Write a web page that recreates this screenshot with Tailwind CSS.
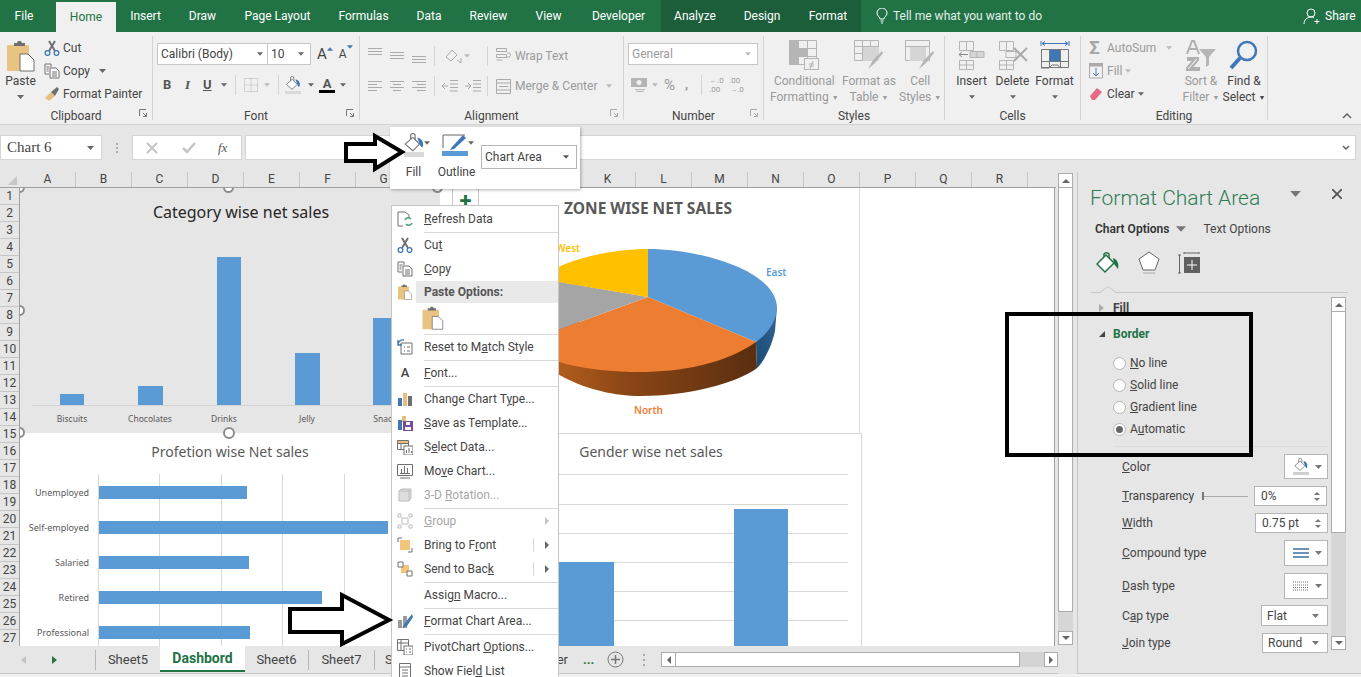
<!DOCTYPE html>
<html lang="en">
<head>
    <meta charset="UTF-8">
    <title>Excel - Format Chart Area</title>
    <script src="https://cdn.jsdelivr.net/npm/@tailwindcss/browser@4"></script>
</head>
<body class="m-0 overflow-hidden">
<svg class="hidden" xmlns="http://www.w3.org/2000/svg">
    <symbol id="caret" viewBox="0 0 7 4"><polygon points="0,0 7,0 3.5,4" fill="currentColor"/></symbol>
    <symbol id="clip" viewBox="0 0 28 32">
        <rect x="0" y="5" width="22" height="26" rx="1" fill="#e8c382"/>
        <path d="M7 6V3h3l1-2h3l1 2h3v3z" fill="#6f6f6f"/>
        <path d="M13 14h8l6 6v11H13z" fill="#fff" stroke="#6f6f6f"/>
    </symbol>
    <symbol id="cut" viewBox="0 0 16 16">
        <path d="M5 1l6 10M11 1L5 11" stroke="#6f6f6f" stroke-width="2" fill="none"/>
        <circle cx="3.5" cy="13" r="2.4" fill="none" stroke="#3f78b5" stroke-width="1.3"/>
        <circle cx="12.5" cy="13" r="2.4" fill="none" stroke="#3f78b5" stroke-width="1.3"/>
    </symbol>
    <symbol id="copy" viewBox="0 0 16 16">
        <path d="M1 1h6v3M1 1v10h4" fill="#fff" stroke="#6f6f6f"/>
        <path d="M6 5h6l3 3v7H6z" fill="#fff" stroke="#6f6f6f"/>
        <path d="M8 9h5M8 11h5M8 13h5M2.500 4h3M2.500 6h2M2.500 8h2" stroke="#6f6f6f"/>
    </symbol>
    <symbol id="bucket" viewBox="0 0 18 18">
        <path d="M6 7V2.500a2 2 0 0 1 4 0V7" fill="none" stroke="#6f6f6f"/>
        <path d="M1 10l7-6 6 6-6 6z" fill="#fff" stroke="#6f6f6f"/>
        <path d="M12 4c4 1 6 4 5 8-.2 1-1.500 1-2 0l-1-2z" fill="#3f78b5"/>
    </symbol>
</svg>

<div class="relative w-[1361px] h-[677px] overflow-hidden bg-[#e6e6e6] text-[12px] text-[#444] font-['Roboto',sans-serif]">

    <!-- tabs -->
    <div class="flex h-[32px] bg-[#217346] text-white text-[12px] leading-[32px]">
        <div class="w-[48px] text-center">File</div>
        <div class="w-[60px] ml-[8px] mt-[2px] leading-[30px] text-center bg-[#f0f0f0] text-[#217346]">Home</div>
        <div class="w-[59px] text-center">Insert</div>
        <div class="w-[55px] text-center">Draw</div>
        <div class="w-[95px] text-center">Page Layout</div>
        <div class="w-[77px] text-center">Formulas</div>
        <div class="w-[54px] text-center">Data</div>
        <div class="w-[65px] text-center">Review</div>
        <div class="w-[55px] text-center">View</div>
        <div class="w-[85px] text-center">Developer</div>
        <div class="flex w-[200px] bg-[#1b5e39]">
            <div class="w-[68px] text-center">Analyze</div>
            <div class="w-[66px] text-center">Design</div>
            <div class="w-[66px] text-center">Format</div>
        </div>
        <div class="flex items-center ml-[15px] w-[427px]">
            <svg class="w-[12px] h-[16px]" viewBox="0 0 12 16" fill="none" stroke="#fff"><path d="M4 11c0-2-3-3-3-6a5 5 0 0 1 10 0c0 3-3 4-3 6zM4.500 13h3M5 15h2"/></svg>
            <span class="ml-[5px] text-[#e3efe8]">Tell me what you want to do</span>
        </div>
        <div class="flex items-center">
            <svg class="w-[18px] h-[18px]" viewBox="0 0 18 18" fill="none" stroke="#fff"><circle cx="8" cy="6" r="4"/><path d="M1 17c0-4 3-7 7-7 1 0 2 .2 3 .6M14 12v5M11.500 14.500h5"/></svg>
            <span class="ml-[4px]">Share</span>
        </div>
    </div>

    <!-- ribbon -->
    <div class="relative flex h-[93px] bg-[#f0f0f0] border-b border-[#d2d2d2] whitespace-nowrap">
        <!-- clipboard -->
        <div class="relative w-[153px] h-[84px] mt-[4px] border-r border-[#d4d4d4]">
            <div class="flex h-[73px]">
                <div class="flex flex-col items-center w-[41px]">
                    <svg class="w-[28px] h-[32px] mt-[4px] mb-[1px]"><use href="#clip"/></svg>
                    <span class="leading-[16px]">Paste</span>
                    <svg class="w-[7px] h-[4px] mt-[6px] text-[#666]"><use href="#caret"/></svg>
                </div>
                <div class="flex flex-col">
                    <div class="flex items-center h-[23px]"><svg class="w-[16px] h-[16px] ml-[3px]"><use href="#cut"/></svg><span class="ml-[3px]">Cut</span></div>
                    <div class="flex items-center h-[23px]"><svg class="w-[16px] h-[16px] ml-[3px]"><use href="#copy"/></svg><span class="ml-[3px]">Copy</span><svg class="w-[7px] h-[4px] ml-[9px] text-[#666]"><use href="#caret"/></svg></div>
                    <div class="flex items-center h-[23px]">
                        <svg class="w-[16px] h-[16px] ml-[3px]" viewBox="0 0 16 16"><path d="M1 12l6-6 4 4-6 5z" fill="#e6bf7e"/><path d="M7 6l6-5 2 2-4 7z" fill="#6f6f6f"/></svg>
                        <span class="ml-[3px]">Format Painter</span>
                    </div>
                </div>
            </div>
            <div class="h-[11px] text-center leading-[14px]">Clipboard</div>
            <svg class="absolute right-[5px] top-[73px] w-[8px] h-[8px]" viewBox="0 0 8 8" fill="none" stroke="#777"><path d="M.5 7V.500H7M4 4l3.500 3.500M7.500 4v3.500H4"/></svg>
        </div>

        <!-- font -->
        <div class="relative w-[207px] h-[84px] mt-[4px] border-r border-[#d4d4d4]">
            <div class="h-[73px] pl-[4px] pt-[7px]">
                <div class="flex items-center h-[22px]">
                    <div class="flex items-center justify-between w-[111px] h-[22px] px-[3px] bg-white border border-[#c6c6c6]"><span>Calibri (Body)</span><svg class="w-[6px] h-[4px] mr-[1px] text-[#666]"><use href="#caret"/></svg></div>
                    <div class="flex items-center justify-between w-[43px] h-[22px] px-[3px] bg-white border border-[#c6c6c6] border-l-0"><span>10</span><svg class="w-[6px] h-[4px] mr-[3px] text-[#666]"><use href="#caret"/></svg></div>
                    <span class="relative ml-[6px] text-[15px] leading-none">A<svg class="absolute left-[10px] top-[0px] w-[6px] h-[4px] rotate-180 text-[#3f78b5]"><use href="#caret"/></svg></span>
                    <span class="relative ml-[12px] text-[12px] leading-none">A<svg class="absolute left-[8px] top-[-3px] w-[6px] h-[4px] text-[#3f78b5]"><use href="#caret"/></svg></span>
                </div>
                <div class="flex items-center h-[24px] mt-[8px] text-[#555]">
                    <b class="ml-[6px] w-[12px] text-[13px]">B</b>
                    <i class="ml-[10px] w-[10px] text-[13px] font-['Liberation_Serif',serif] font-bold">I</i>
                    <u class="ml-[8px] w-[10px] text-[13px] font-bold">U</u>
                    <svg class="w-[6px] h-[4px] ml-[8px] text-[#666]"><use href="#caret"/></svg>
                    <span class="w-px h-[20px] ml-[8px] bg-[#d4d4d4]"></span>
                    <svg class="w-[14px] h-[14px] ml-[8px]" viewBox="0 0 14 14" fill="none" stroke="#b5b5b5" stroke-dasharray="1 1"><path d="M.5.500h13v13H.5zM7 .500v13M.5 7h13"/></svg>
                    <svg class="w-[6px] h-[4px] ml-[6px] text-[#bbb]"><use href="#caret"/></svg>
                    <span class="w-px h-[20px] ml-[8px] bg-[#d4d4d4]"></span>
                    <span class="relative flex w-[18px] h-[18px] ml-[6px]"><svg class="w-[16px] h-[15px]"><use href="#bucket"/></svg><span class="absolute left-0 bottom-0 w-[16px] h-[3px] bg-[#d9d9d9]"></span></span>
                    <svg class="w-[6px] h-[4px] ml-[5px] text-[#666]"><use href="#caret"/></svg>
                    <span class="flex flex-col items-center w-[16px] ml-[5px] font-bold text-[13px] leading-[13px]">A<span class="block w-[16px] h-[3px] bg-black"></span></span>
                    <svg class="w-[6px] h-[4px] ml-[5px] text-[#666]"><use href="#caret"/></svg>
                </div>
            </div>
            <div class="h-[11px] text-center leading-[14px]">Font</div>
            <svg class="absolute right-[5px] top-[73px] w-[8px] h-[8px]" viewBox="0 0 8 8" fill="none" stroke="#777"><path d="M.5 7V.500H7M4 4l3.500 3.500M7.500 4v3.500H4"/></svg>
        </div>

        <!-- alignment -->
        <div class="relative w-[264px] h-[84px] mt-[4px] border-r border-[#d4d4d4] text-[#9a9a9a]">
            <div class="h-[73px] pl-[8px]">
                <div class="flex items-center h-[35px] pt-[4px]">
                    <svg class="w-[14px] h-[14px] mb-[5px]" viewBox="0 0 14 14" stroke="#aaa"><path d="M0 2.500h14M0 5.500h14M0 8.500h14"/></svg>
                    <svg class="w-[14px] h-[14px] ml-[8px]" viewBox="0 0 14 14" stroke="#aaa"><path d="M0 3.500h14M0 6.500h14M0 9.500h14"/></svg>
                    <svg class="w-[14px] h-[14px] ml-[8px] mt-[5px]" viewBox="0 0 14 14" stroke="#aaa"><path d="M0 5.500h14M0 8.500h14M0 11.500h14"/></svg>
                    <span class="w-px h-[20px] ml-[8px] bg-[#d4d4d4]"></span>
                    <svg class="w-[17px] h-[16px] ml-[10px]" viewBox="0 0 17 16" fill="none" stroke="#aaa"><path d="M1 9l6-7 5 5-6 6zM12 12l4 3M16 10v5"/></svg>
                    <svg class="w-[6px] h-[4px] ml-[2px] text-[#bbb]"><use href="#caret"/></svg>
                    <span class="w-px h-[20px] ml-[17px] bg-[#d4d4d4]"></span>
                    <svg class="w-[15px] h-[15px] ml-[8px]" viewBox="0 0 15 15" fill="none" stroke="#aaa"><path d="M.5.500h10v3H.5zM.5 6.500h10v3H.5zM.5 12h6M11 5h2c2 0 2 4 0 4h-3"/></svg>
                    <span class="ml-[4px]">Wrap Text</span>
                </div>
                <div class="flex items-center h-[24px] mt-[3px]">
                    <svg class="w-[14px] h-[14px]" viewBox="0 0 14 14" stroke="#aaa"><path d="M0 2.500h14M0 5.500h9M0 8.500h14M0 11.500h9"/></svg>
                    <svg class="w-[14px] h-[14px] ml-[8px]" viewBox="0 0 14 14" stroke="#aaa"><path d="M0 2.500h14M3 5.500h8M0 8.500h14M3 11.500h8"/></svg>
                    <svg class="w-[14px] h-[14px] ml-[8px]" viewBox="0 0 14 14" stroke="#aaa"><path d="M0 2.500h14M5 5.500h9M0 8.500h14M5 11.500h9"/></svg>
                    <span class="w-px h-[20px] ml-[8px] bg-[#d4d4d4]"></span>
                    <svg class="w-[16px] h-[14px] ml-[7px]" viewBox="0 0 16 14" stroke="#aaa" fill="none"><path d="M8 1.500h8M8 5h8M8 8.500h8M8 12h8M6 7H0M3 4L0 7l3 3" /></svg>
                    <svg class="w-[16px] h-[14px] ml-[7px]" viewBox="0 0 16 14" stroke="#aaa" fill="none"><path d="M8 1.500h8M8 5h8M8 8.500h8M8 12h8M0 7h6M3 4l3 3-3 3" /></svg>
                    <span class="w-px h-[20px] ml-[6px] bg-[#d4d4d4]"></span>
                    <svg class="w-[15px] h-[15px] ml-[8px]" viewBox="0 0 15 15" fill="none" stroke="#aaa"><path d="M.5.500h14v14H.5zM.5 4h14M.5 11h14M3 7.500h9"/></svg>
                    <span class="ml-[4px]">Merge &amp; Center</span>
                    <svg class="w-[6px] h-[4px] ml-[9px] text-[#bbb]"><use href="#caret"/></svg>
                </div>
            </div>
            <div class="h-[11px] text-center leading-[14px] text-[#444]">Alignment</div>
            <svg class="absolute right-[5px] top-[73px] w-[8px] h-[8px]" viewBox="0 0 8 8" fill="none" stroke="#aaa"><path d="M.5 7V.500H7M4 4l3.500 3.500M7.500 4v3.500H4"/></svg>
        </div>

        <!-- number -->
        <div class="relative w-[140px] h-[84px] mt-[4px] border-r border-[#d4d4d4] text-[#9a9a9a]">
            <div class="h-[73px] pl-[4px] pt-[7px]">
                <div class="flex items-center justify-between w-[130px] h-[22px] px-[3px] bg-white border border-[#c6c6c6]"><span>General</span><svg class="w-[6px] h-[4px] mr-[3px] text-[#bbb]"><use href="#caret"/></svg></div>
                <div class="flex items-center h-[24px] mt-[8px]">
                    <svg class="w-[16px] h-[16px] ml-[3px]" viewBox="0 0 16 16" fill="#b5b5b5"><path d="M0 1h16v9H0z"/><circle cx="8" cy="5.500" r="2.500" fill="#f0f0f0"/><path d="M4 12h10v1H4zM5 14h8v1H5z"/></svg>
                    <svg class="w-[6px] h-[4px] ml-[5px] text-[#bbb]"><use href="#caret"/></svg>
                    <span class="ml-[6px] text-[15px]">%</span>
                    <b class="ml-[10px] text-[13px]">,</b>
                    <span class="w-px h-[20px] ml-[13px] bg-[#d4d4d4]"></span>
                    <span class="ml-[7px] w-[15px] text-[8px] leading-[9px]">&larr;.0<br>.00</span>
                    <span class="ml-[5px] w-[15px] text-[8px] leading-[9px]">.00<br>&rarr;.0</span>
                </div>
            </div>
            <div class="h-[11px] text-center leading-[14px] text-[#444]">Number</div>
            <svg class="absolute right-[5px] top-[73px] w-[8px] h-[8px]" viewBox="0 0 8 8" fill="none" stroke="#aaa"><path d="M.5 7V.500H7M4 4l3.500 3.500M7.500 4v3.500H4"/></svg>
        </div>

        <!-- styles -->
        <div class="w-[181px] h-[84px] mt-[4px] border-r border-[#d4d4d4] text-[#9a9a9a]">
            <div class="flex h-[73px] pl-[3px] text-center leading-[16px]">
                <div class="flex flex-col items-center w-[75px]">
                    <svg class="w-[30px] h-[32px] mt-[4px] mb-[1px]" viewBox="0 0 30 32" fill="none" stroke="#b5b5b5"><path d="M.5.500h27v24H.5zM.5 8.500h27M.5 16.500h27M9.500.500v24M18.500.500v24"/><path d="M1 1h8v24H1zM9 8h9v8H9z" fill="#b5b5b5" stroke="none"/><rect x="15.500" y="18.500" width="14" height="11" fill="#f0f0f0"/><path d="M20 24h5M20 26h5M24 21l-3 8" /></svg>
                    <span>Conditional</span>
                    <span>Formatting<span class="ml-[3px] text-[7px] align-[1px]">&#9660;</span></span>
                </div>
                <div class="flex flex-col items-center w-[55px]">
                    <svg class="w-[30px] h-[32px] mt-[4px] mb-[1px]" viewBox="0 0 30 32" fill="none" stroke="#b5b5b5"><path d="M.5.500h24v20H.5zM.5 6.500h24M.5 13.500h24M8.500.500v20M16.500.500v20"/><path d="M9 7h16v14H9z" fill="#d5d5d5" stroke="none"/><path d="M14 29l5-9 9-9 1 2-8 10-7 6z" fill="#b5b5b5" stroke="none"/></svg>
                    <span>Format as</span>
                    <span>Table<span class="ml-[3px] text-[7px] align-[1px]">&#9660;</span></span>
                </div>
                <div class="flex flex-col items-center w-[48px]">
                    <svg class="w-[30px] h-[32px] mt-[4px] mb-[1px]" viewBox="0 0 30 32" fill="none" stroke="#b5b5b5"><path d="M.5.500h24v20H.5zM.5 6.500h24"/><path d="M5 7h16v14H5z" fill="#d5d5d5" stroke="none"/><path d="M14 29l5-9 9-9 1 2-8 10-7 6z" fill="#b5b5b5" stroke="none"/></svg>
                    <span>Cell</span>
                    <span>Styles<span class="ml-[3px] text-[7px] align-[1px]">&#9660;</span></span>
                </div>
            </div>
            <div class="h-[11px] text-center leading-[14px] text-[#444]">Styles</div>
        </div>

        <!-- cells -->
        <div class="w-[136px] h-[84px] mt-[4px] border-r border-[#d4d4d4]">
            <div class="flex h-[73px] pl-[6px] text-center leading-[16px]">
                <div class="flex flex-col items-center w-[41px]">
                    <svg class="w-[28px] h-[32px] mt-[4px] mb-[1px]" viewBox="0 0 28 32" fill="none" stroke="#b5b5b5"><path d="M1.500 1.500h14v9h-14zM8.500 1.500v9M1.500 20.500h14v9h-14zM8.500 20.500v9M1.500 25h14"/><path d="M12 11.500h14v6H12zM19 11.500v6" fill="#d5d5d5"/><path d="M10 14.500H1M4 12l-3 2.500L4 17" stroke="#888"/></svg>
                    <span>Insert</span>
                    <svg class="w-[6px] h-[4px] mt-[6px] text-[#666]"><use href="#caret"/></svg>
                </div>
                <div class="flex flex-col items-center w-[41px]">
                    <svg class="w-[30px] h-[32px] mt-[4px] mb-[1px]" viewBox="0 0 30 32" fill="none" stroke="#b5b5b5"><path d="M1.500 1.500h14v9h-14zM8.500 1.500v9M1.500 20.500h14v9h-14zM8.500 20.500v9M1.500 25h14M8 11.500h10v6H8z"/><path d="M16 8l13 13M29 8L16 21" stroke="#aaa" stroke-width="2"/></svg>
                    <span>Delete</span>
                    <svg class="w-[6px] h-[4px] mt-[6px] text-[#666]"><use href="#caret"/></svg>
                </div>
                <div class="flex flex-col items-center w-[43px]">
                    <svg class="w-[30px] h-[32px] mt-[2px] mb-[3px]" viewBox="0 0 30 32" fill="none" stroke="#777"><path d="M1 3v5M29 3v5M2 5.500h26M2 5.500l3-2M2 5.500l3 2M28 5.500l-3-2M28 5.500l-3 2" stroke="#3f78b5"/><path d="M1.500 11.500h27v18h-27zM1.500 23.500h27M9.500 11.500v18M20.500 11.500v18"/><rect x="10" y="12" width="10" height="11" fill="#3f78b5" stroke="none"/><path d="M1 30h8l3-3h6l2 3" stroke="#777"/></svg>
                    <span>Format</span>
                    <svg class="w-[6px] h-[4px] mt-[6px] text-[#666]"><use href="#caret"/></svg>
                </div>
            </div>
            <div class="h-[11px] text-center leading-[14px]">Cells</div>
        </div>

        <!-- editing -->
        <div class="w-[187px] h-[84px] mt-[4px] border-r border-[#d4d4d4]">
            <div class="flex h-[73px]">
                <div class="flex flex-col w-[100px] pl-[8px]">
                    <div class="flex items-center h-[23px] text-[#9a9a9a]"><span class="w-[18px] text-[19px] leading-none font-bold text-[#a6a6a6]">&Sigma;</span><span>AutoSum</span><svg class="w-[6px] h-[4px] ml-[10px] text-[#bbb]"><use href="#caret"/></svg></div>
                    <div class="flex items-center h-[23px] text-[#9a9a9a]"><svg class="w-[14px] h-[16px] mr-[4px]" viewBox="0 0 14 16" fill="none" stroke="#aaa"><path d="M.5 3h13v12H.5z"/><path d="M0 0h14v3H0z" fill="#aaa" stroke="none"/><path d="M7 5v8M4 10l3 3 3-3" stroke="#4b7fb8"/></svg><span>Fill</span><svg class="w-[6px] h-[4px] ml-[3px] text-[#bbb]"><use href="#caret"/></svg></div>
                    <div class="flex items-center h-[23px]"><svg class="w-[14px] h-[14px] mr-[4px]" viewBox="0 0 14 14"><path d="M1 9l7-8 5 4-7 8H3z" fill="#e56a85"/></svg><span>Clear</span><svg class="w-[6px] h-[4px] ml-[3px] text-[#666]"><use href="#caret"/></svg></div>
                </div>
                <div class="flex flex-col items-center w-[40px] text-[#9a9a9a] leading-[16px] text-center">
                    <svg class="w-[30px] h-[32px] mt-[4px] mb-[1px]" viewBox="0 0 30 32"><path d="M1 14L6 1h2l5 13M3 9h8M2 18h10v2L5 28h8v2H1v-2L8 20H2z" fill="none" stroke="#b0b0b0" stroke-width="2"/><path d="M13 9h17l-7 8v8l-3 2V17z" fill="#b5b5b5"/></svg>
                    <span>Sort &amp;</span>
                    <span>Filter<span class="ml-[3px] text-[7px] align-[1px]">&#9660;</span></span>
                </div>
                <div class="flex flex-col items-center w-[44px] ml-[1px] leading-[16px] text-center">
                    <svg class="w-[30px] h-[32px] mt-[4px] mb-[1px]" viewBox="0 0 30 32" fill="none" stroke="#3f78b5"><circle cx="18" cy="11" r="9" stroke-width="2.500"/><path d="M11 18L2 28" stroke-width="4"/></svg>
                    <span>Find &amp;</span>
                    <span>Select<span class="ml-[3px] text-[7px] align-[1px]">&#9660;</span></span>
                </div>
            </div>
            <div class="h-[11px] text-center leading-[14px]">Editing</div>
        </div>

        <svg class="absolute right-[9px] bottom-[5px] w-[10px] h-[6px]" viewBox="0 0 10 6" fill="none" stroke="#666" stroke-width="1.500"><path d="M1 5l4-4 4 4"/></svg>
    </div>

    <!-- formula bar -->
    <div class="flex h-[47px] pt-[10px] pb-[12px]">
        <div class="flex items-center justify-between w-[102px] bg-white border border-[#d4d4d4] pl-[6px] pr-[7px] text-[15px] font-['Liberation_Serif',serif]"><span>Chart 6</span><svg class="w-[7px] h-[4px] text-[#666]"><use href="#caret"/></svg></div>
        <div class="flex flex-col justify-center gap-[2px] w-[30px] items-center"><span class="w-[2px] h-[2px] bg-[#aaa]"></span><span class="w-[2px] h-[2px] bg-[#aaa]"></span><span class="w-[2px] h-[2px] bg-[#aaa]"></span></div>
        <div class="flex items-center w-[110px] bg-white border border-[#d4d4d4] text-[#c4c4c4]">
            <svg class="w-[12px] h-[12px] ml-[13px]" viewBox="0 0 12 12" stroke="#c4c4c4" stroke-width="2"><path d="M1 1l10 10M11 1L1 11"/></svg>
            <svg class="w-[14px] h-[12px] ml-[24px]" viewBox="0 0 14 12" fill="none" stroke="#c4c4c4" stroke-width="2.500"><path d="M1 6l4 4 8-9"/></svg>
            <i class="ml-[22px] text-[13px] text-[#555] font-['Liberation_Serif',serif]">fx</i>
        </div>
        <div class="flex items-center justify-end w-[1111px] ml-[3px] bg-white border border-[#d4d4d4] pr-[5px]">
            <svg class="w-[8px] h-[5px]" viewBox="0 0 8 5" fill="none" stroke="#666" stroke-width="1.500"><path d="M1 1l3 3 3-3"/></svg>
        </div>
    </div>

    <div class="flex">
        <!-- worksheet -->
        <div class="w-[1077px]">
            <div id="columns" class="flex h-[16px] w-[1056px] bg-[#e6e6e6] border-b border-[#9f9f9f] text-[12px] leading-[15px]">
                <div class="w-[20px] relative"><span class="absolute right-[3px] bottom-[2px] w-0 h-0 border-l-[9px] border-l-transparent border-b-[9px] border-b-[#c6c6c6]"></span></div>
            </div>
            <div class="flex">
                <div id="rows" class="w-[20px] h-[458px] overflow-hidden bg-[#e6e6e6] border-r border-[#9f9f9f] text-[12px]"></div>
                <div class="relative w-[1035px] h-[458px] overflow-hidden bg-white border-r border-[#9f9f9f]">
                    <!-- Category chart -->
                    <svg class="absolute left-0 top-0" width="420" height="246" viewBox="20 188 420 246" font-family="Noto Sans">
                        <rect x="20" y="188" width="420" height="245" fill="#e7e6e6"/>
                        <text x="241" y="218" text-anchor="middle" font-size="16" fill="#262626">Category wise net sales</text>
                        <path d="M32 405.500H390" stroke="#d4d4d4"/>
                        <g fill="#5b9bd5"><rect x="60" y="394" width="24" height="11"/><rect x="138" y="386" width="25" height="19"/><rect x="217" y="257" width="24" height="148"/><rect x="295" y="353" width="25" height="52"/><rect x="373" y="318" width="25" height="87"/></g>
                        <g font-size="8.500" fill="#595959" text-anchor="middle"><text x="72" y="422">Biscuits</text><text x="150" y="422">Chocolates</text><text x="224" y="422">Drinks</text><text x="307" y="422">Jelly</text><text x="385" y="422">Snack</text></g>
                    </svg>
                    <!-- Zone chart -->
                    <svg class="absolute left-[420px] top-0" width="420" height="246" viewBox="440 188 420 246" font-family="Noto Sans">
                        <defs>
                            <linearGradient id="side" x1="0" x2="1" y1="0" y2="0"><stop offset="0" stop-color="#c8691f"/><stop offset=".45" stop-color="#8a4616"/><stop offset="1" stop-color="#5a2e0f"/></linearGradient>
                            <linearGradient id="blueside" x1="0" x2="1" y1="1" y2="0"><stop offset="0" stop-color="#1d4a73"/><stop offset="1" stop-color="#2f6498"/></linearGradient>
                        </defs>
                        <path d="M859.500 188V433.500H440" fill="none" stroke="#d9d9d9"/>
                        <text x="648" y="214" text-anchor="middle" font-size="15.500" font-weight="700" fill="#595959">ZONE WISE NET SALES</text>
                        <path d="M520 330C530 370 590 396 640 396C700 396 745 378 757 368L756 342L560 320z" fill="url(#side)"/>
                        <path d="M756 342L777 307L775 331C772 345 765 360 757 368z" fill="url(#blueside)"/>
                        <path d="M648 297V249C700 249 775 270 777 307C777 320 768 334 756 342z" fill="#5b9bd5"/>
                        <path d="M648 297L756 342C725 364 680 372 640 372C590 372 540 362 530 345L530 340z" fill="#ed7d31"/>
                        <path d="M648 297L530 340L525 285L560 282z" fill="#a5a5a5"/>
                        <path d="M648 297L540 279C560 260 610 249 648 249z" fill="#ffc000"/>
                        <g font-size="10" font-weight="600"><text x="766" y="276" fill="#5b9bd5">East</text><text x="556" y="252" fill="#ffc000">West</text><text x="634" y="414" fill="#ed7d31">North</text></g>
                    </svg>
                    <!-- Profession chart -->
                    <svg class="absolute left-0 top-[246px]" width="420" height="212" viewBox="20 434 420 212" font-family="Noto Sans">
                        <text x="230" y="457" text-anchor="middle" font-size="14" fill="#595959">Profetion wise Net sales</text>
                        <path d="M98.500 474V646M159.500 474V646M221.500 474V646M282.500 474V646M344.500 474V646" stroke="#d9d9d9"/>
                        <g fill="#5b9bd5"><rect x="99" y="486" width="148" height="13"/><rect x="99" y="521" width="289" height="13"/><rect x="99" y="556" width="150" height="13"/><rect x="99" y="591" width="223" height="13"/><rect x="99" y="626" width="151" height="13"/></g>
                        <g font-size="9" fill="#595959" text-anchor="end"><text x="89" y="496">Unemployed</text><text x="89" y="531">Self-employed</text><text x="89" y="566">Salaried</text><text x="89" y="601">Retired</text><text x="89" y="636">Professional</text></g>
                    </svg>
                    <!-- Gender chart -->
                    <svg class="absolute left-[420px] top-[245px]" width="443" height="213" viewBox="440 433 443 213" font-family="Noto Sans">
                        <path d="M440 433.500H861.500V646" fill="none" stroke="#d9d9d9"/>
                        <text x="651" y="457" text-anchor="middle" font-size="14" fill="#595959">Gender wise net sales</text>
                        <path d="M500 474.500H848M500 504.500H848M500 533.500H848M500 562.500H848M500 591.500H848M500 620.500H848" stroke="#d9d9d9"/>
                        <g fill="#5b9bd5"><rect x="540" y="562" width="74" height="84"/><rect x="734" y="509" width="54" height="137"/></g>
                    </svg>
                    <!-- selection handles -->
                    <span class="absolute left-[203px] top-[-6px] w-[11px] h-[11px] rounded-full bg-white border-2 border-[#8c8c8c]"></span>
                    <span class="absolute left-[-6px] top-[-6px] w-[11px] h-[11px] rounded-full bg-white border-2 border-[#8c8c8c]"></span>
                    <span class="absolute left-[412px] top-[-6px] w-[11px] h-[11px] rounded-full bg-white border-2 border-[#8c8c8c]"></span>
                    <span class="absolute left-[-6px] top-[117px] w-[11px] h-[11px] rounded-full bg-white border-2 border-[#8c8c8c]"></span>
                    <span class="absolute left-[-6px] top-[239px] w-[11px] h-[11px] rounded-full bg-white border-2 border-[#8c8c8c]"></span>
                    <span class="absolute left-[203px] top-[239px] w-[12px] h-[12px] rounded-full bg-white border-2 border-[#8c8c8c]"></span>
                </div>
            </div>

            <!-- sheet tabs -->
            <div class="flex items-center h-[28px] w-[1058px] border-b border-[#c6c6c6] text-[13px]">
                <div class="flex items-center w-[96px] h-[20px] pl-[21px] border-r border-[#b5b5b5]">
                    <span class="w-0 h-0 border-y-[4px] border-y-transparent border-r-[5px] border-r-[#c4c4c4]"></span>
                    <span class="ml-[26px] w-0 h-0 border-y-[4px] border-y-transparent border-l-[5px] border-l-[#217346]"></span>
                </div>
                <div class="w-[64px] text-center">Sheet5</div>
                <div class="w-[85px] h-[26px] mb-[1px] leading-[24px] text-center font-bold text-[14px] text-[#217346] bg-white border-b-2 border-[#217346]">Dashbord</div>
                <div class="w-[64px] h-[20px] leading-[20px] text-center border-r border-[#b5b5b5]">Sheet6</div>
                <div class="w-[66px] h-[20px] leading-[20px] text-center border-r border-[#b5b5b5]">Sheet7</div>
                <div class="flex justify-between w-[195px] pl-[10px] pr-[2px]"><span>Sheet8</span><span>Customer</span></div>
                <div class="ml-[13px] w-[12px] font-bold text-[#217346] leading-[10px]">...</div>
                <svg class="ml-[12px] w-[17px] h-[17px]" viewBox="0 0 17 17" fill="none" stroke="#777"><circle cx="8.500" cy="8.500" r="7.500"/><path d="M8.500 4v9M4 8.500h9" stroke-width="1.500"/></svg>
                <div class="ml-[19px] flex flex-col gap-[3px]"><span class="w-[2px] h-[2px] bg-[#aaa]"></span><span class="w-[2px] h-[2px] bg-[#aaa]"></span><span class="w-[2px] h-[2px] bg-[#aaa]"></span></div>
                <div class="flex items-center ml-[16px] w-[397px] h-[15px] bg-[#d4d4d4]">
                    <div class="flex items-center justify-center w-[15px] h-[15px] bg-white border border-[#ababab]"><span class="w-0 h-0 border-y-[4px] border-y-transparent border-r-[4px] border-r-[#666]"></span></div>
                    <div class="w-[344px] h-[15px] bg-white border-y border-r border-[#ababab]"></div>
                    <div class="flex items-center justify-center ml-[24px] w-[14px] h-[15px] bg-white border border-[#ababab]"><span class="w-0 h-0 border-y-[4px] border-y-transparent border-l-[4px] border-l-[#666]"></span></div>
                </div>
            </div>
        </div>

        <!-- format panel -->
        <div class="w-[284px] h-[502px] border-l border-b border-[#c6c6c6]">
            <div class="flex items-center h-[32px] mt-[10px] pl-[12px]">
                <span class="w-[200px] text-[21px] leading-none font-light text-[#2e7d55]">Format Chart Area</span>
                <svg class="w-[11px] h-[6px] mb-[9px] text-[#777]"><use href="#caret"/></svg>
                <svg class="ml-[31px] mb-[9px] w-[10px] h-[10px]" viewBox="0 0 10 10" stroke="#555" stroke-width="1.800"><path d="M0 0l10 10M10 0L0 10"/></svg>
            </div>
            <div class="flex items-center h-[22px] mt-[4px] pl-[17px]">
                <b class="font-semibold text-[#333]">Chart Options</b>
                <svg class="w-[10px] h-[6px] ml-[7px] text-[#777]"><use href="#caret"/></svg>
                <span class="ml-[17px]">Text Options</span>
            </div>
            <div class="flex items-center h-[26px] mt-[10px] pl-[18px]">
                <svg class="w-[24px] h-[24px]" viewBox="0 0 24 24" fill="none" stroke="#217346" stroke-width="1.500"><path d="M8 9V3a3 3 0 0 1 5 0v6"/><path d="M1 13l9-9 8 8-9 9z" fill="#fff"/><path d="M17 7c5 2 6 6 5 11l-4-5z" fill="#217346" stroke="none"/></svg>
                <svg class="w-[22px] h-[24px] ml-[18px]" viewBox="0 0 22 24" fill="#fff" stroke="#666"><path d="M11 1l10 7-4 11H5L1 8z"/><path d="M5 22h12" stroke="#aaa"/></svg>
                <svg class="w-[22px] h-[22px] ml-[18px]" viewBox="0 0 22 22"><path d="M1.500 3v18M0 3h3M0 21h3M6 1h15M6 0v2M21 0v2" stroke="#666" fill="none"/><rect x="6" y="5" width="16" height="16" fill="#5f5f5f"/><path d="M14 8v10M9 13h10" stroke="#fff"/></svg>
            </div>
            <svg class="block mt-[10px] ml-[13px]" width="257" height="7" viewBox="0 0 257 7" fill="none" stroke="#c6c6c6"><path d="M0 6.500H9L17 .500L25 6.500H257"/></svg>
            <div class="flex mt-[5px]">
                <div class="w-[253px]">
                    <div class="flex items-center h-[20px] mt-[0px] pl-[21px] font-bold text-[#444]"><span class="w-0 h-0 border-y-[4px] border-y-transparent border-l-[5px] border-l-[#aaa]"></span><span class="ml-[9px]">Fill</span></div>
                    <div class="flex items-center h-[20px] mt-[6px] pl-[21px] font-bold text-[#217346]"><span class="w-0 h-0 border-l-[6px] border-l-transparent border-b-[6px] border-b-[#444]"></span><span class="ml-[8px]">Border</span></div>
                    <div class="flex items-center gap-[4px] h-[22px] mt-[8px] pl-[35px]"><span class="w-[13px] h-[13px] rounded-full bg-white border border-[#b5b5b5]"></span><span><u>N</u>o line</span></div>
                    <div class="flex items-center gap-[4px] h-[22px] pl-[35px]"><span class="w-[13px] h-[13px] rounded-full bg-white border border-[#b5b5b5]"></span><span><u>S</u>olid line</span></div>
                    <div class="flex items-center gap-[4px] h-[22px] pl-[35px]"><span class="w-[13px] h-[13px] rounded-full bg-white border border-[#b5b5b5]"></span><span><u>G</u>radient line</span></div>
                    <div class="flex items-center gap-[4px] h-[22px] pl-[35px]"><span class="flex items-center justify-center w-[13px] h-[13px] rounded-full bg-white border border-[#b5b5b5]"><span class="w-[7px] h-[7px] rounded-full bg-[#666]"></span></span><span>A<u>u</u>tomatic</span></div>
                    <div class="h-px mt-[6px] ml-[36px] mr-[3px] bg-[#dcdcdc]"></div>
                    <div class="flex items-center justify-between h-[25px] mt-[7px] pl-[44px] pr-[3px]"><span><u>C</u>olor</span>
                        <div class="flex items-center w-[44px] h-[25px] pl-[8px] bg-white border border-[#b5b5b5]"><span class="relative block w-[17px] h-[17px]"><svg class="w-[16px] h-[14px]"><use href="#bucket"/></svg><span class="absolute left-0 bottom-0 w-[16px] h-[3px] bg-[#cfcfcf]"></span></span><svg class="w-[7px] h-[4px] ml-[5px] text-[#777]"><use href="#caret"/></svg></div>
                    </div>
                    <div class="flex items-center h-[20px] mt-[7px] pl-[44px] pr-[3px]"><span class="w-[80px]"><u>T</u>ransparency</span>
                        <span class="flex items-center w-[46px]"><span class="w-[2px] h-[8px] bg-[#777]"></span><span class="w-[44px] h-px bg-[#aaa]"></span></span>
                        <div class="flex items-center justify-between w-[73px] h-[20px] ml-[6px] px-[6px] bg-white border border-[#b5b5b5]"><span>0%</span><span class="flex flex-col gap-[3px]"><span class="w-0 h-0 border-x-[3px] border-x-transparent border-b-[3px] border-b-[#777]"></span><span class="w-0 h-0 border-x-[3px] border-x-transparent border-t-[3px] border-t-[#777]"></span></span></div>
                    </div>
                    <div class="flex items-center justify-between h-[20px] mt-[7px] pl-[44px] pr-[3px]"><span><u>W</u>idth</span>
                        <div class="flex items-center justify-between w-[73px] h-[20px] px-[6px] bg-white border border-[#b5b5b5]"><span>0.75 pt</span><span class="flex flex-col gap-[3px]"><span class="w-0 h-0 border-x-[3px] border-x-transparent border-b-[3px] border-b-[#777]"></span><span class="w-0 h-0 border-x-[3px] border-x-transparent border-t-[3px] border-t-[#777]"></span></span></div>
                    </div>
                    <div class="flex items-center justify-between h-[26px] mt-[7px] pl-[44px] pr-[3px]"><span><u>C</u>ompound type</span>
                        <div class="flex items-center w-[44px] h-[26px] pl-[8px] bg-white border border-[#b5b5b5]"><svg class="w-[16px] h-[10px]" viewBox="0 0 16 10" stroke="#3f6f9f"><path d="M0 1h16M0 5h16M0 9h16" stroke-width="1.300"/></svg><svg class="w-[7px] h-[4px] ml-[6px] text-[#777]"><use href="#caret"/></svg></div>
                    </div>
                    <div class="flex items-center justify-between h-[26px] mt-[7px] pl-[44px] pr-[3px]"><span><u>D</u>ash type</span>
                        <div class="flex items-center w-[44px] h-[26px] pl-[8px] bg-white border border-[#b5b5b5]"><svg class="w-[16px] h-[10px]" viewBox="0 0 16 10" stroke="#777"><path d="M0 1h16M0 4h16M0 6.500h16M0 9h16" stroke-dasharray="1 1"/></svg><svg class="w-[7px] h-[4px] ml-[6px] text-[#777]"><use href="#caret"/></svg></div>
                    </div>
                    <div class="flex items-center justify-between h-[21px] mt-[6px] pl-[44px] pr-[3px]"><span>C<u>a</u>p type</span>
                        <div class="flex items-center justify-between w-[67px] h-[21px] pl-[5px] pr-[8px] bg-white border border-[#b5b5b5]"><span>Flat</span><svg class="w-[7px] h-[4px] text-[#777]"><use href="#caret"/></svg></div>
                    </div>
                    <div class="flex items-center justify-between h-[20px] mt-[7px] pl-[44px] pr-[3px]"><span><u>J</u>oin type</span>
                        <div class="flex items-center justify-between w-[66px] h-[20px] pl-[5px] pr-[8px] bg-white border border-[#b5b5b5]"><span>Round</span><svg class="w-[7px] h-[4px] text-[#777]"><use href="#caret"/></svg></div>
                    </div>
                </div>
                <div class="flex flex-col w-[15px] h-[353px] mt-[-1px] bg-[#d6d6d6]">
                    <div class="flex items-center justify-center h-[15px] bg-white border border-[#ababab]"><span class="w-0 h-0 border-x-[4px] border-x-transparent border-b-[4px] border-b-[#666]"></span></div>
                    <div class="h-[221px] bg-white border-x border-b border-[#ababab]"></div>
                    <div class="flex items-center justify-center h-[14px] mt-auto bg-white border border-[#ababab]"><span class="w-0 h-0 border-x-[4px] border-x-transparent border-t-[4px] border-t-[#666]"></span></div>
                </div>
            </div>
        </div>
    </div>
    <div class="h-[3px] bg-[#f0f0f0]"></div>

    <!-- worksheet vertical scrollbar -->
    <div class="absolute left-[1058px] top-[173px] flex flex-col w-[15px] h-[472px] bg-[#d6d6d6]">
        <div class="flex items-center justify-center h-[15px] bg-white border border-[#ababab]"><span class="w-0 h-0 border-x-[4px] border-x-transparent border-b-[4px] border-b-[#666]"></span></div>
        <div class="h-[424px] bg-white border-x border-b border-[#ababab]"></div>
        <div class="flex items-center justify-center h-[14px] mt-auto bg-white border border-[#ababab]"><span class="w-0 h-0 border-x-[4px] border-x-transparent border-t-[4px] border-t-[#666]"></span></div>
    </div>

    <!-- chart + button -->
    <div class="absolute left-[452px] top-[188px] flex justify-center w-[27px] h-[30px] bg-white border border-[#c6c6c6] text-[#217346] text-[22px] font-bold leading-[24px]">+</div>

    <!-- mini toolbar -->
    <div class="absolute left-[390px] top-[127px] flex w-[190px] h-[62px] bg-white shadow-[1px_1px_3px_rgba(0,0,0,0.3)]">
        <div class="flex flex-col items-center w-[47px] pt-[6px]">
            <div class="relative flex items-start h-[27px] ml-[7px]">
                <svg class="w-[20px] h-[20px]"><use href="#bucket"/></svg>
                <span class="absolute left-0 top-[19px] w-[20px] h-[5px] bg-[#d9d9d9]"></span>
                <svg class="w-[6px] h-[4px] mt-[8px] text-[#666]"><use href="#caret"/></svg>
            </div>
            <span class="mt-[3px] leading-[18px]">Fill</span>
        </div>
        <div class="flex flex-col items-center w-[39px] pt-[6px]">
            <div class="relative flex items-start h-[27px] ml-[3px]">
                <svg class="w-[26px] h-[23px]" viewBox="0 0 26 23"><path d="M1 15V2h22" fill="none" stroke="#666"/><path d="M10 14l11-12 3 3-12 11-4 1z" fill="#3f78b5"/><rect x="0" y="18" width="26" height="5" fill="#5b9bd5"/></svg>
                <svg class="w-[6px] h-[4px] mt-[8px] text-[#666]"><use href="#caret"/></svg>
            </div>
            <span class="mt-[3px] leading-[18px]">Outline</span>
        </div>
        <div class="flex items-center justify-between w-[96px] h-[24px] mt-[18px] ml-[5px] pl-[3px] pr-[7px] bg-white border border-[#b5b5b5]"><span>Chart Area</span><svg class="w-[6px] h-[4px] text-[#555]"><use href="#caret"/></svg></div>
    </div>

    <!-- context menu -->
    <div class="absolute left-[391px] top-[205px] w-[168px] h-[480px] pt-[1px] bg-white border border-[#c6c6c6]">
        <div class="flex items-center h-[24px]"><svg class="w-[16px] h-[16px] ml-[5px]" viewBox="0 0 16 16" fill="none"><path d="M1 1h7l4 3v3M1 1v14h5" stroke="#6f6f6f"/><path d="M8 9a3.500 3.500 0 0 1 6-1M15 12a3.500 3.500 0 0 1-6 1" stroke="#3f9c6b" stroke-width="1.500"/></svg><span class="ml-[11px]"><u>R</u>efresh Data</span></div>
        <div class="h-[2px] ml-[32px] border-b border-[#d9d9d9]"></div>
        <div class="flex items-center h-[24px]"><svg class="w-[16px] h-[16px] ml-[5px]"><use href="#cut"/></svg><span class="ml-[11px]">Cu<u>t</u></span></div>
        <div class="flex items-center h-[24px]"><svg class="w-[16px] h-[16px] ml-[5px]"><use href="#copy"/></svg><span class="ml-[11px]"><u>C</u>opy</span></div>
        <div class="flex items-center h-[22px]"><svg class="w-[16px] h-[16px] ml-[5px]"><use href="#clip"/></svg><span class="flex items-center h-[22px] w-[142px] ml-[3px] pl-[8px] font-bold bg-[#e9e9e9] text-[#555]">Paste Options:</span></div>
        <div class="flex items-center h-[30px]"><svg class="w-[22px] h-[24px] ml-[30px]"><use href="#clip"/></svg></div>
        <div class="h-[2px] ml-[32px] border-b border-[#d9d9d9]"></div>
        <div class="flex items-center h-[24px]"><svg class="w-[16px] h-[16px] ml-[5px]" viewBox="0 0 16 16" fill="none"><path d="M4 4h11v11H4zM7 8h1M10 8h3M7 12h1M10 12h3" stroke="#6f6f6f"/><path d="M1 6a5 5 0 0 1 6-5M1 1v5h4" stroke="#3f78b5" stroke-width="1.400"/></svg><span class="ml-[11px]">Reset to M<u>a</u>tch Style</span></div>
        <div class="h-[2px] ml-[32px] border-b border-[#d9d9d9]"></div>
        <div class="flex items-center h-[24px]"><span class="w-[16px] ml-[5px] text-center font-medium text-[13px]">A</span><span class="ml-[11px]"><u>F</u>ont...</span></div>
        <div class="h-[2px] ml-[32px] border-b border-[#d9d9d9]"></div>
        <div class="flex items-center h-[24px]"><svg class="w-[16px] h-[16px] ml-[5px]" viewBox="0 0 16 16"><rect x="1" y="7" width="4" height="8" fill="#3f78b5"/><rect x="6" y="2" width="4" height="13" fill="#e6bf7e"/><rect x="11" y="5" width="4" height="10" fill="#6f6f6f"/></svg><span class="ml-[11px]">Change Chart T<u>y</u>pe...</span></div>
        <div class="flex items-center h-[24px]"><svg class="w-[16px] h-[16px] ml-[5px]" viewBox="0 0 16 16"><rect x="1" y="5" width="4" height="10" fill="#3f78b5"/><rect x="5" y="1" width="4" height="6" fill="#e6bf7e"/><rect x="6" y="6" width="10" height="10" fill="#7a4aa0"/><rect x="9" y="7" width="4" height="3" fill="#fff"/><rect x="8" y="12" width="6" height="3" fill="#fff"/></svg><span class="ml-[11px]"><u>S</u>ave as Template...</span></div>
        <div class="flex items-center h-[24px]"><svg class="w-[16px] h-[16px] ml-[5px]" viewBox="0 0 16 16" fill="none" stroke="#6f6f6f"><path d="M.5 1.500h11v9H.5zM.5 4.500h11M4 1.500v9"/><rect x="7" y="7" width="9" height="9" fill="#fff"/><path d="M9.500 14v-3M12 14V9M14.500 14v-2"/><path d="M1 2h10v2H1z" fill="#e6bf7e" stroke="none"/></svg><span class="ml-[11px]">S<u>e</u>lect Data...</span></div>
        <div class="flex items-center h-[24px]"><svg class="w-[16px] h-[16px] ml-[5px]" viewBox="0 0 16 16" fill="none" stroke="#6f6f6f"><path d="M.5 1.500h15v11H.5zM3 15h10"/><path d="M4.500 10V6M7.500 10V3M10.500 10V5M3 10.500h10"/></svg><span class="ml-[11px]">Mo<u>v</u>e Chart...</span></div>
        <div class="flex items-center h-[24px] text-[#a6a6a6]"><svg class="w-[16px] h-[16px] ml-[5px]" viewBox="0 0 16 16" fill="#ddd" stroke="#bdbdbd"><path d="M2 4l2-2h10v9l-2 3H2z"/><path d="M2 4h10v10M12 4l2-2" fill="none"/></svg><span class="ml-[11px]">3-D <u>R</u>otation...</span></div>
        <div class="h-[2px] ml-[32px] border-b border-[#d9d9d9]"></div>
        <div class="relative flex items-center h-[24px] text-[#a6a6a6]"><svg class="w-[16px] h-[16px] ml-[5px]" viewBox="0 0 16 16" fill="none" stroke="#bdbdbd"><path d="M1 1h3v3H1zM12 1h3v3h-3zM1 12h3v3H1zM12 12h3v3h-3zM5 5h6v6H5z"/></svg><span class="ml-[11px]"><u>G</u>roup</span><span class="absolute right-[9px] w-0 h-0 border-y-[4px] border-y-transparent border-l-[4px] border-l-[#c4c4c4]"></span></div>
        <div class="relative flex items-center h-[24px]"><svg class="w-[16px] h-[16px] ml-[5px]" viewBox="0 0 16 16" fill="none" stroke="#6f6f6f"><path d="M1 5V1h4M15 11v4h-4"/><rect x="3" y="3" width="10" height="10" fill="#f2c67a" stroke="none"/></svg><span class="ml-[11px]">Bring to F<u>r</u>ont</span><span class="absolute right-[24px] w-px h-[14px] bg-[#d9d9d9]"></span><span class="absolute right-[9px] w-0 h-0 border-y-[4px] border-y-transparent border-l-[4px] border-l-[#666]"></span></div>
        <div class="relative flex items-center h-[24px]"><svg class="w-[16px] h-[16px] ml-[5px]" viewBox="0 0 16 16" fill="none" stroke="#6f6f6f"><rect x="4" y="4" width="8" height="8" fill="#f2c67a" stroke="none"/><path d="M1 1h5v5H1zM10 10h5v5h-5z" fill="#fff"/></svg><span class="ml-[11px]">Send to Bac<u>k</u></span><span class="absolute right-[24px] w-px h-[14px] bg-[#d9d9d9]"></span><span class="absolute right-[9px] w-0 h-0 border-y-[4px] border-y-transparent border-l-[4px] border-l-[#666]"></span></div>
        <div class="h-[2px] ml-[32px] border-b border-[#d9d9d9]"></div>
        <div class="flex items-center h-[24px]"><span class="ml-[32px]">Assig<u>n</u> Macro...</span></div>
        <div class="h-[2px] ml-[32px] border-b border-[#d9d9d9]"></div>
        <div class="flex items-center h-[24px]"><svg class="w-[16px] h-[16px] ml-[5px]" viewBox="0 0 16 16"><rect x="1" y="7" width="4" height="8" fill="#9a9a9a"/><rect x="6" y="3" width="4" height="12" fill="#9a9a9a"/><path d="M15 1l-7 9-3 5 5-2 6-9z" fill="#3f78b5"/></svg><span class="ml-[11px]"><u>F</u>ormat Chart Area...</span></div>
        <div class="h-[2px] ml-[32px] border-b border-[#d9d9d9]"></div>
        <div class="flex items-center h-[24px]"><svg class="w-[16px] h-[16px] ml-[5px]" viewBox="0 0 16 16" fill="none" stroke="#6f6f6f"><path d="M.5.500h11v11H.5zM.5 4h11M4 .5v11"/><rect x="7" y="7" width="9" height="9" fill="#fff"/><path d="M9 10h1M12 10h2M9 13h1M12 13h2"/></svg><span class="ml-[11px]">PivotChart <u>O</u>ptions...</span></div>
        <div class="flex items-center h-[24px]"><svg class="w-[16px] h-[16px] ml-[5px]" viewBox="0 0 16 16" fill="none" stroke="#6f6f6f"><path d="M2.500.5h11v15h-11zM2.500 4h11M5 7h6M5 10h6M5 13h6"/></svg><span class="ml-[11px]">Show Fiel<u>d</u> List</span></div>
    </div>

    <!-- annotations -->
    <svg class="absolute left-[340px] top-[130px]" width="70" height="46" viewBox="340 130 70 46" fill="#fff" stroke="#000" stroke-width="4"><polygon points="346,144 375,144 375,136 402,152 375,169 375,161 346,161"/></svg>
    <svg class="absolute left-[286px] top-[590px]" width="110" height="60" viewBox="286 590 110 60" fill="#fff" stroke="#000" stroke-width="4"><polygon points="290,609 342,609 342,595 389,620 342,644 342,632 290,632"/></svg>
    <div class="absolute left-[1005px] top-[312px] w-[248px] h-[145px] border-[4px] border-black"></div>
</div>

<script>
    // Column and row headers of the sheet
    const columns = document.getElementById("columns");
    "ABCDEFGHIJKLMNOPQR".split("").forEach((name) => {
        const cell = document.createElement("div");
        cell.className = "w-[56px] text-center border-r border-[#c6c6c6]";
        cell.textContent = name;
        columns.appendChild(cell);
    });
    const rows = document.getElementById("rows");
    for (let i = 1; i <= 27; i++) {
        const cell = document.createElement("div");
        cell.className = "h-[17px] leading-[16px] text-center border-b border-[#c6c6c6]";
        cell.textContent = i;
        rows.appendChild(cell);
    }
</script>
</body>
</html>
